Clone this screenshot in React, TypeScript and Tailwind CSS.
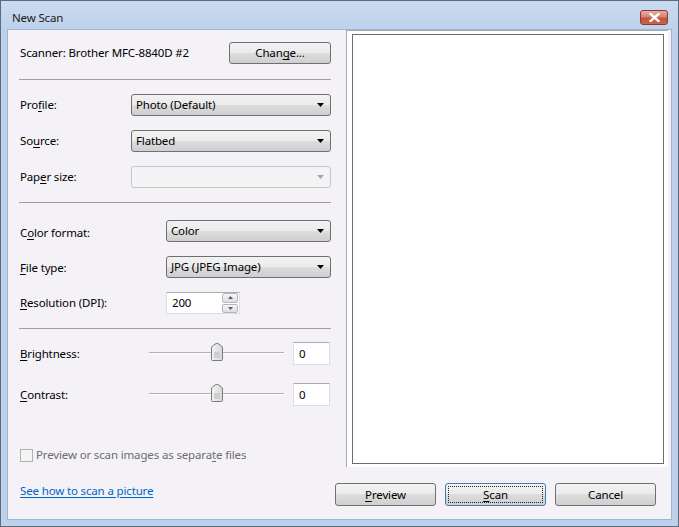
import React from "react";

const U = ({ c }: { c: string }) => <span className="underline underline-offset-[2px]">{c}</span>;

function Combo({ w, children, disabled }: { w: string; children?: React.ReactNode; disabled?: boolean }) {
  return (
    <div
      className={`${w} h-[22px] shrink-0 rounded-[3px] border flex items-center pl-[4px] pr-[6px] ${
        disabled
          ? "border-[#c3c7cb] bg-[#f4f4f4]"
          : "border-[#707070] bg-[linear-gradient(to_bottom,#f2f2f2_0%,#ebebeb_50%,#dddddd_50%,#cfcfcf_100%)]"
      }`}
    >
      <span className="flex-1 leading-none">{children}</span>
      <svg width="7" height="4" viewBox="0 0 7 4">
        <path d="M0 0H7L3.5 4Z" fill={disabled ? "#a6a6a6" : "#000"} />
      </svg>
    </div>
  );
}

function Btn({ children, focused }: { children: React.ReactNode; focused?: boolean }) {
  return (
    <div
      className={`w-[101px] h-[23px] rounded-[3px] border flex items-center justify-center p-[2px] ${
        focused ? "border-[#3c7fb1]" : "border-[#707070]"
      } bg-[linear-gradient(to_bottom,#f2f2f2_0%,#ebebeb_50%,#dddddd_50%,#cfcfcf_100%)]`}
    >
      <div
        className={`w-full h-full flex items-center justify-center ${
          focused ? "border border-dotted border-[#222]" : ""
        }`}
      >
        {children}
      </div>
    </div>
  );
}

function Sep() {
  return <div className="h-px bg-[#a0a0a0] ml-[-1px]" />;
}

function Slider() {
  return (
    <div className="relative w-[135px] h-[23px]">
      <div className="absolute left-0 right-0 top-[10px] h-[2px] border-t border-[#b0b0b0] border-b border-b-white" />
      <svg className="absolute left-[62px] top-[1px]" width="12" height="18" viewBox="0 0 12 18">
        <defs>
          <linearGradient id="tg" x1="0" y1="0" x2="1" y2="0">
            <stop offset="0" stopColor="#f4f4f4" />
            <stop offset="1" stopColor="#d6d6d6" />
          </linearGradient>
        </defs>
        <path d="M0.5 5 Q0.5 4 1.5 3 L5 0.5 Q6 0 7 0.5 L10.5 3 Q11.5 4 11.5 5 L11.5 16.5 Q11.5 17.5 10.5 17.5 L1.5 17.5 Q0.5 17.5 0.5 16.5 Z" fill="url(#tg)" stroke="#7a7a7a" />
        <rect x="3" y="9" width="6" height="6" fill="#cfcfcf" />
      </svg>
    </div>
  );
}

function NumBox({ v }: { v: string }) {
  return (
    <div className="w-[37px] h-[23px] ml-[9px] bg-white border border-[#dbdfe6] border-t-[#abadb3] flex items-center pl-[5px]">
      {v}
    </div>
  );
}

export default function App() {
  return (
    <div className="w-[679px] h-[527px] bg-[#bcd2ec] border border-[#5f6b7a] flex flex-col font-['Noto_Sans',sans-serif] text-[11.5px] tracking-[-0.15px] text-black overflow-hidden">
      {/* Title bar */}
      <div className="h-[28px] shrink-0 flex items-start bg-[linear-gradient(to_bottom,#c9dbf0,#bdd2eb)]">
        <div className="pl-[11px] pt-[8px] text-[#1a1a1a]">New Scan</div>
        <div className="ml-auto mr-[10px] mt-[9px] w-[28px] h-[15px] rounded-[3px] border border-[#8c3a30] bg-[linear-gradient(to_bottom,#e9aea4_0%,#d8806f_45%,#c4513f_55%,#c9654f_100%)] flex items-center justify-center">
          <svg width="11" height="9" viewBox="0 0 11 9">
            <path d="M1.5 1L9.5 8M9.5 1L1.5 8" stroke="#fff" strokeWidth="2.4" strokeLinecap="square" />
          </svg>
        </div>
      </div>

      {/* Client */}
      <div className="mx-[6px] mb-[6px] flex-1 border border-[#9db5d3] bg-[#f4f2f6] flex flex-col">
        <div className="h-[437px] flex">
          {/* Left column */}
          <div className="w-[338px] pl-[12px] pr-[15px] pt-[12px] flex flex-col">
            <div className="h-[22px] flex items-center">
              <span className="flex-1">Scanner: Brother MFC-8840D #2</span>
              <div className="w-[102px] h-[22px] rounded-[3px] border border-[#707070] bg-[linear-gradient(to_bottom,#f2f2f2_0%,#ebebeb_50%,#dddddd_50%,#cfcfcf_100%)] flex items-center justify-center">
                <span>
                  Chan<U c="g" />e...
                </span>
              </div>
            </div>
            <div className="mt-[15px]">
              <Sep />
            </div>
            <div className="mt-[14px] h-[22px] flex items-center">
              <span className="w-[111px] shrink-0">
                Pro<U c="f" />ile:
              </span>
              <Combo w="w-[200px]">Photo (Default)</Combo>
            </div>
            <div className="mt-[14px] h-[22px] flex items-center">
              <span className="w-[111px] shrink-0">
                So<U c="u" />rce:
              </span>
              <Combo w="w-[200px]">Flatbed</Combo>
            </div>
            <div className="mt-[14px] h-[22px] flex items-center">
              <span className="w-[111px] shrink-0">
                Pap<U c="e" />r size:
              </span>
              <Combo w="w-[200px]" disabled />
            </div>
            <div className="mt-[14px]">
              <Sep />
            </div>
            <div className="mt-[17px] h-[22px] flex items-center">
              <span className="w-[146px] shrink-0 mt-[3px]">
                C<U c="o" />lor format:
              </span>
              <Combo w="w-[165px]">Color</Combo>
            </div>
            <div className="mt-[14px] h-[22px] flex items-center">
              <span className="w-[146px] shrink-0 mt-[2px]">
                <U c="F" />ile type:
              </span>
              <Combo w="w-[165px]">JPG (JPEG Image)</Combo>
            </div>
            <div className="mt-[14px] h-[22px] flex items-center">
              <span className="w-[146px] shrink-0">
                <U c="R" />esolution (DPI):
              </span>
              <div className="w-[74px] h-[22px] bg-white border border-[#dbdfe6] border-t-[#abadb3] flex items-center">
                <span className="flex-1 pl-[5px]">200</span>
                <div className="w-[17px] h-[20px] flex flex-col gap-px pr-px">
                  <div className="flex-1 rounded-[2px] border border-[#b6b6b6] bg-[linear-gradient(to_bottom,#f6f6f6,#dedede)] flex items-center justify-center">
                    <svg width="5" height="3" viewBox="0 0 5 3">
                      <path d="M0 3H5L2.5 0Z" fill="#4a5d80" />
                    </svg>
                  </div>
                  <div className="flex-1 rounded-[2px] border border-[#b6b6b6] bg-[linear-gradient(to_bottom,#f6f6f6,#dedede)] flex items-center justify-center">
                    <svg width="5" height="3" viewBox="0 0 5 3">
                      <path d="M0 0H5L2.5 3Z" fill="#4a5d80" />
                    </svg>
                  </div>
                </div>
              </div>
            </div>
            <div className="mt-[14px]">
              <Sep />
            </div>
            <div className="mt-[13px] h-[23px] flex items-center">
              <span className="w-[129px] shrink-0">
                <U c="B" />rightness:
              </span>
              <Slider />
              <NumBox v="0" />
            </div>
            <div className="mt-[18px] h-[23px] flex items-center">
              <span className="w-[129px] shrink-0">
                <U c="C" />ontrast:
              </span>
              <Slider />
              <NumBox v="0" />
            </div>
            <div className="mt-[42px] h-[14px] flex items-center text-[#6d6d6d]">
              <div className="w-[13px] h-[13px] border border-[#b1b1b1] bg-[#f4f4f4] shrink-0" />
              <span className="ml-[3px]">
                Preview or scan images as separa<U c="t" />e files
              </span>
            </div>
          </div>

          {/* Preview */}
          <div className="w-[322px] h-[437px] bg-white border-l border-t border-[#a8a8a8] pl-[5px] pt-[3px] pr-[4px] pb-[3px]">
            <div className="w-full h-full border border-[#6d6d6d] bg-white" />
          </div>
        </div>

        {/* Bottom */}
        <div className="flex-1 flex items-start pt-[16px] pl-[12px] pr-[15px]">
          <span className="mt-[-1px] text-[#0066cc] underline underline-offset-[2px]">See how to scan a picture</span>
          <div className="ml-auto flex gap-[9px]">
            <Btn>
              <span>
                <U c="P" />review
              </span>
            </Btn>
            <Btn focused>
              <span>
                <U c="S" />can
              </span>
            </Btn>
            <Btn>Cancel</Btn>
          </div>
        </div>
      </div>
    </div>
  );
}
